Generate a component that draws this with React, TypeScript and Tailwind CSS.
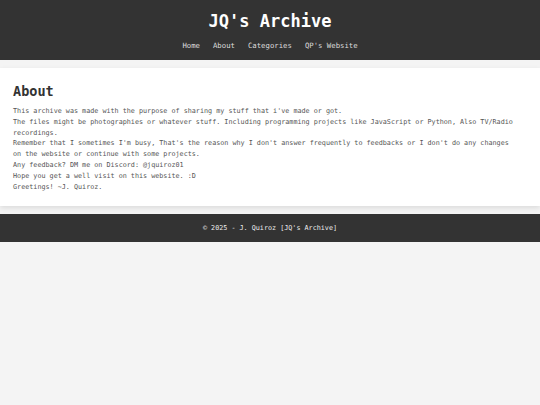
export default function App() {
  const font = { fontFamily: '"DejaVu Sans Mono", "Liberation Mono", monospace' };
  return (
    <div className="min-h-[405px] bg-[#f4f4f4]" style={font}>
      <header className="h-[60px] bg-[#333333] flex flex-col items-center pt-[10px]">
        <h1 className="text-[17px] leading-[22px] font-bold text-white">JQ's Archive</h1>
        <nav className="mt-[9px] flex gap-[13px] text-[7.3px] leading-[10px] text-[#dddddd]">
          <a>Home</a>
          <a>About</a>
          <a>Categories</a>
          <a>QP's Website</a>
        </nav>
      </header>

      <main className="mt-[8px] bg-white pt-[15px] pl-[13px] pr-[22px] pb-[14px] shadow-[0_2px_5px_rgba(0,0,0,0.1)]">
        <h2 className="text-[13.5px] leading-[16px] font-bold text-[#333333] mb-[7px]">About</h2>
        <p className="text-[6.75px] leading-[10.8px] text-[#555555]">
          This archive was made with the purpose of sharing my stuff that i've made or got.
          <br />
          The files might be photographies or whatever stuff. Including programming projects like JavaScript or Python, Also TV/Radio recordings.
          <br />
          Remember that I sometimes I'm busy, That's the reason why I don't answer frequently to feedbacks or I don't do any changes on the website or continue with some projects.
          <br />
          Any feedback? DM me on Discord: @jquiroz01
          <br />
          Hope you get a well visit on this website. :D
          <br />
          Greetings! ~J. Quiroz.
        </p>
      </main>

      <footer className="mt-[8px] h-[28px] bg-[#333333] flex items-center justify-center text-[6.75px] text-[#eeeeee]">
        © 2025 - J. Quiroz [JQ's Archive]
      </footer>
    </div>
  );
}
